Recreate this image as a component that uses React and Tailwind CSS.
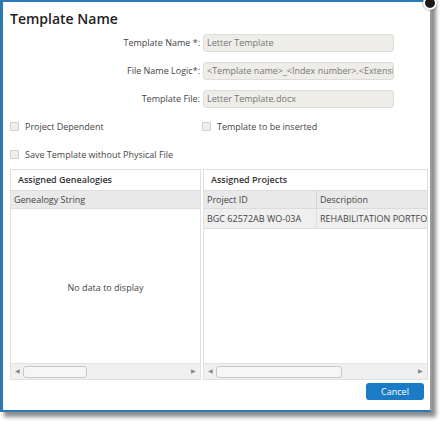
import React from "react";

const font = { fontFamily: '"Open Sans", "Noto Sans", sans-serif' };

const FormRow = ({ label, value }) => (
  <div className="flex items-center h-[18px]">
    <div className="w-[200px] pr-[3px] text-right text-[9px] text-[#444]">{label}</div>
    <div className="w-[191px] h-[18px] flex items-center px-[3px] bg-[#eeede9] border border-[#dddcd6] rounded-[3px] text-[9px] text-[#777] overflow-hidden whitespace-nowrap">
      {value}
    </div>
  </div>
);

const Check = ({ label }) => (
  <div className="flex items-center gap-[6px] text-[9px] text-[#444]">
    <span className="w-[9px] h-[9px] border border-[#cfcfcf] bg-[#eeeeee] rounded-[1px]" />
    <span>{label}</span>
  </div>
);

const ScrollBar = ({ thumb }) => (
  <div className="h-[16px] bg-[#f0f0f0] border-t border-[#e2e2e2] flex items-center px-[4px] gap-[3px]">
    <span className="text-[6px] text-[#888]">◀</span>
    <div className={`${thumb} h-[12px] bg-[#f6f6f6] border border-[#c8c8c8] rounded-[3px]`} />
    <div className="flex-1" />
    <span className="text-[6px] text-[#888]">▶</span>
  </div>
);

export default function App() {
  return (
    <div className="w-[445px] h-[426px] bg-white relative" style={font}>
      <div className="w-[432px] h-[412px] bg-white border-l-[3px] border-t-[2px] border-b-[2px] border-[#2a7ab8] border-r-[2px] border-r-[#9a9a9a] shadow-[4px_5px_4px_rgba(0,0,0,0.45)] flex flex-col">
        <div className="pl-[7px] pt-[7px] text-[14px] font-semibold text-[#222] leading-[19px]">Template Name</div>
        <div className="flex flex-col gap-[10px] mt-[6px]">
          <FormRow label="Template Name *:" value="Letter Template" />
          <FormRow label="File Name Logic*:" value="<Template name>_<Index number>.<Extension>" />
          <FormRow label="Template File:" value="Letter Template.docx" />
        </div>
        <div className="flex mt-[12px] pl-[7px]">
          <div className="w-[192px]">
            <Check label="Project Dependent" />
          </div>
          <Check label="Template to be inserted" />
        </div>
        <div className="mt-[14px] pl-[7px]">
          <Check label="Save Template without Physical File" />
        </div>
        <div className="flex mt-[8px] pl-[7px] gap-[2px]">
          <div className="w-[191px] h-[211px] border border-[#e0e0e0] flex flex-col">
            <div className="h-[20px] flex items-center px-[7px] text-[9px] font-semibold text-[#333] bg-white">Assigned Genealogies</div>
            <div className="h-[19px] flex items-center px-[3px] text-[9px] text-[#444] bg-[#e9e9e9] border-y border-[#dcdcdc]">Genealogy String</div>
            <div className="flex-1 flex items-center justify-center pt-[4px] text-[9px] text-[#444]">No data to display</div>
            <ScrollBar thumb="w-[64px]" />
          </div>
          <div className="w-[225px] h-[211px] border border-[#e0e0e0] flex flex-col overflow-hidden">
            <div className="h-[20px] flex items-center px-[7px] text-[9px] font-semibold text-[#333] bg-white">Assigned Projects</div>
            <div className="h-[19px] flex text-[9px] text-[#444] bg-[#e9e9e9] border-y border-[#dcdcdc]">
              <div className="w-[113px] shrink-0 flex items-center px-[3px] border-r border-[#d4d4d4]">Project ID</div>
              <div className="flex items-center px-[3px] whitespace-nowrap">Description</div>
            </div>
            <div className="h-[20px] flex text-[9px] text-[#444] bg-[#efefef] border-b border-[#dcdcdc] whitespace-nowrap">
              <div className="w-[113px] shrink-0 flex items-center px-[3px] border-r border-[#dedede]">BGC 62572AB WO-03A</div>
              <div className="flex items-center px-[3px]">REHABILITATION PORTFOLIO</div>
            </div>
            <div className="flex-1" />
            <ScrollBar thumb="w-[126px]" />
          </div>
        </div>
        <div className="flex justify-end pr-[6px] mt-[3px]">
          <div className="w-[58px] h-[17px] bg-[#1b7bc4] rounded-[3px] text-white text-[9px] flex items-center justify-center">Cancel</div>
        </div>
      </div>
      <div className="absolute left-[423px] top-[-4px] w-[14px] h-[14px] rounded-full bg-[#1a1a1a] border-[2px] border-white shadow-[0_0_2px_rgba(0,0,0,0.6)]" />
    </div>
  );
}
